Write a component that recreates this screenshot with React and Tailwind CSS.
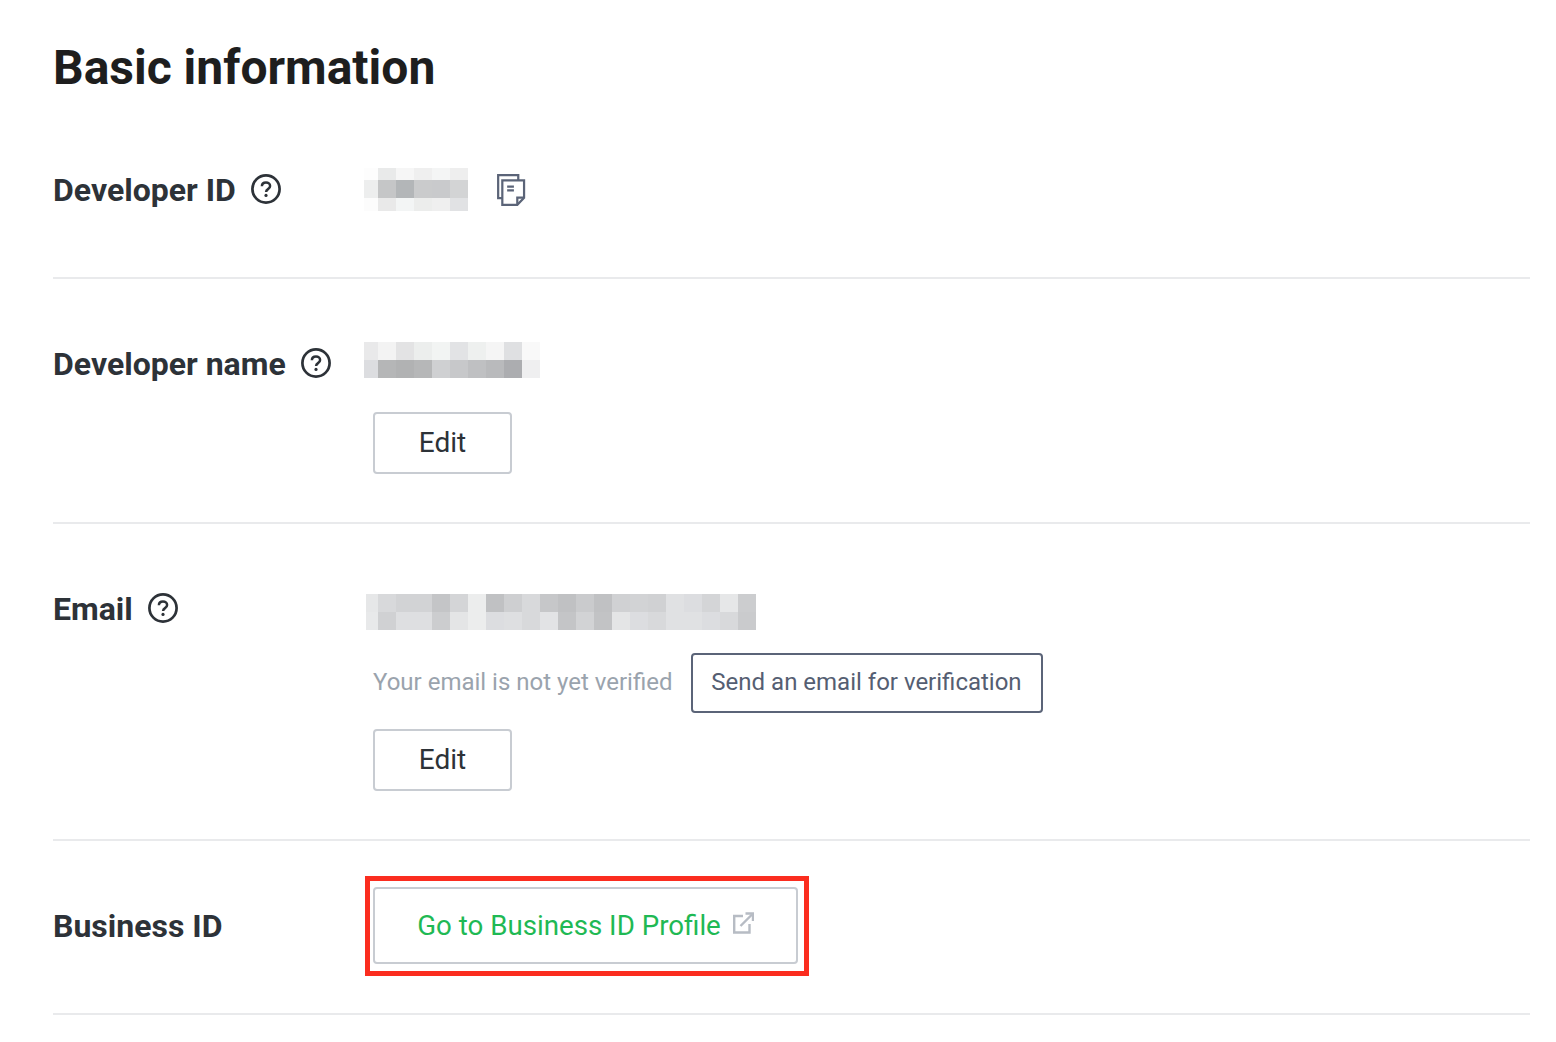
const idCells = [
  ["#fdfdfd", "#e9eaea", "#f6f6f6", "#efefef", "#f4f5f5", "#eeeeee"],
  ["#edeeee", "#c5c6c7", "#b3b6b8", "#cacbcc", "#c9cacc", "#d3d4d5"],
  ["#fcfcfc", "#e9e9e9", "#f3f5f5", "#ecedec", "#efefef", "#e1e2e4"],
];
const nameCells = [
  ["#e9e9ea", "#f3f3f3", "#e3e3e4", "#eceeed", "#f2f4f3", "#e2e3e5", "#eef0ef", "#f5f5f5", "#dfe0e2", "#f9f9f9"],
  ["#dcdde0", "#b5b6b7", "#b1b2b3", "#b6b7b8", "#cfd0d2", "#c7c8ca", "#bfc0c2", "#b9babc", "#acadb0", "#efeff0"],
];
const emailCells = [
  ["#e6e7e8", "#d8d9db", "#d2d3d5", "#d2d3d5", "#c4c5c7", "#d4d5d7", "#eceded", "#c0c1c3", "#cecfd1", "#d8d9db", "#c6c7c9", "#c0c1c3", "#cacbcd", "#c0c1c3", "#d0d1d3", "#d2d3d5", "#d0d1d3", "#e0e1e3", "#dcdde0", "#d4d5d7", "#e6e7e8", "#cccdcf"],
  ["#e8e9ea", "#d0d1d3", "#dedfe1", "#dedfe1", "#cccdcf", "#e4e5e6", "#eceded", "#dcdde0", "#dedfe1", "#d8d9db", "#e2e3e5", "#c4c5c7", "#d2d3d5", "#c2c3c5", "#e4e5e6", "#dcdde0", "#d8d9db", "#e0e1e3", "#e0e1e3", "#dcdde0", "#d8d9db", "#cacbcd"],
];

// blurred-out values: first column is narrower than the others
function Mosaic({ cells, first, rowHeights, className }) {
  const width = first + (cells[0].length - 1) * 18;
  const height = rowHeights.reduce((a, b) => a + b, 0);
  return (
    <svg width={width} height={height} shapeRendering="crispEdges" className={className}>
      {cells.map((row, r) =>
        row.map((color, c) => (
          <rect
            key={c}
            x={c === 0 ? 0 : first + (c - 1) * 18}
            y={rowHeights.slice(0, r).reduce((a, b) => a + b, 0)}
            width={c === 0 ? first : 18}
            height={rowHeights[r]}
            fill={color}
          />
        ))
      )}
    </svg>
  );
}

function HelpIcon() {
  return (
    <svg width="30" height="30" viewBox="0 0 30 30" fill="none" stroke="#2d3238" className="shrink-0 -mt-[2px]">
      <circle cx="15" cy="15" r="13.6" strokeWidth="2.7" />
      <path d="M10.9 12.2c0-2.4 1.8-3.8 4.1-3.8s4.1 1.4 4.1 3.5c0 1.6-.9 2.4-2.1 3.2-1.2.8-1.9 1.4-1.9 2.9" strokeWidth="2.5" />
      <circle cx="15" cy="21.4" r="1.6" fill="#2d3238" stroke="none" />
    </svg>
  );
}

function CopyIcon() {
  return (
    <svg width="29" height="32" viewBox="0 0 30 33" fill="none" stroke="#5b6478" strokeWidth="2.3" className="shrink-0">
      <path d="M5.5 25H1.2V1.2H22V6.5" />
      <path d="M5.5 6.5H28V24.5L21 31.8H5.5Z" fill="#fff" />
      <path d="M28 24.5H21V31.8" />
      <path d="M10.5 13H17.5M10.5 17H17.5" />
    </svg>
  );
}

function ExternalIcon() {
  return (
    <svg width="21" height="22" viewBox="0 0 21 22" fill="none" stroke="#b7bcc4" strokeWidth="2.4" className="shrink-0">
      <path d="M10 4H1.2V20.5H16.5V12" />
      <path d="M7.5 14L19 2.5" />
      <path d="M12.5 1.5H20V9" />
    </svg>
  );
}

function EditButton({ className }) {
  return (
    <button className={`block w-[139px] h-[62px] border-2 border-[#c8ccd2] rounded-[4px] bg-white text-[28px] text-[#2d3238] ${className}`}>
      Edit
    </button>
  );
}

function Row({ label, help, top, children }) {
  return (
    <section className={`flex border-b-2 border-[#e9eaec] ${top}`}>
      <div className="w-[320px] shrink-0 h-[44px] flex items-center gap-[15px] text-[32px] font-bold text-[#2d3238]">
        <span>{label}</span>
        {help && <HelpIcon />}
      </div>
      <div className="flex-1">{children}</div>
    </section>
  );
}

export default function App() {
  return (
    <div className="pl-[53px] pr-[26px] pt-[37px] h-[1042px] overflow-hidden bg-white font-['Roboto',sans-serif]">
      <h1 className="text-[48px] leading-[62px] font-bold text-[#1e1e1e] mb-[34px]">Basic information</h1>

      <Row label="Developer ID" help top="pt-[35px] pb-[65px]">
        <div className="h-[44px] flex items-center -ml-[9px] gap-[29px]">
          <Mosaic cells={idCells} first={14} rowHeights={[12, 18, 13]} className="self-start" />
          <CopyIcon />
        </div>
      </Row>

      <Row label="Developer name" help top="pt-[63px] pb-[48px]">
        <div className="h-[44px] -ml-[9px]">
          <Mosaic cells={nameCells} first={14} rowHeights={[18, 18]} className="block" />
        </div>
        <EditButton className="mt-[26px]" />
      </Row>

      <Row label="Email" help top="pt-[63px] pb-[48px]">
        <div className="h-[44px] pt-[7px] -ml-[7px]">
          <Mosaic cells={emailCells} first={12} rowHeights={[18, 18]} className="block" />
        </div>
        <div className="mt-[22px] flex items-center gap-[18px]">
          <span className="text-[24px] text-[#9aa3ad] pb-[2px]">Your email is not yet verified</span>
          <button className="w-[352px] h-[60px] border-2 border-[#5b6478] rounded-[4px] text-[24px] text-[#555e72] pb-[2px]">
            Send an email for verification
          </button>
        </div>
        <EditButton className="mt-[16px]" />
      </Row>

      <section className="flex border-b-2 border-[#e9eaec] pt-[46px] pb-[49px]">
        <div className="w-[320px] shrink-0 flex items-center text-[32px] font-bold text-[#2d3238]">Business ID</div>
        <div className="relative">
          <button className="w-[425px] h-[77px] border-2 border-[#c8ccd2] rounded-[4px] flex items-center justify-center gap-3 text-[27.7px] text-[#1fb954]">
            <span>Go to Business ID Profile</span>
            <span className="-mt-[6px]"><ExternalIcon /></span>
          </button>
          <div className="absolute -left-[8px] -top-[11px] w-[444px] h-[100px] border-[5px] border-[#fb2d1f]" />
        </div>
      </section>
    </div>
  );
}
